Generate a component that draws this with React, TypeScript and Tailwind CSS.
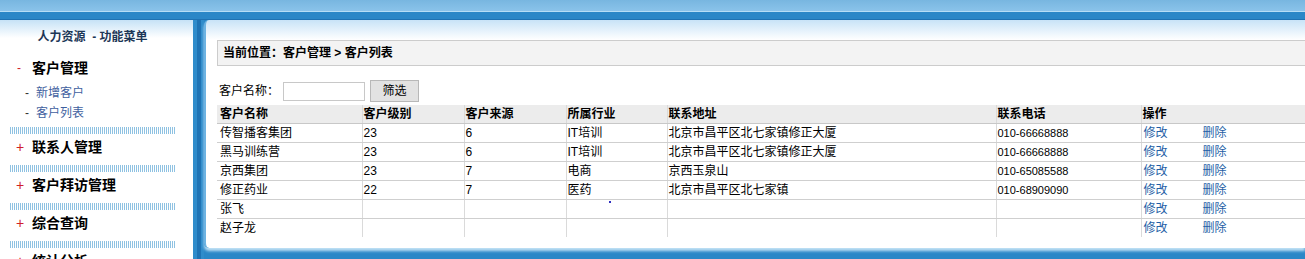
import React from 'react';

const rows = [
  { name: '传智播客集团', level: '23', source: '6', industry: 'IT培训', address: '北京市昌平区北七家镇修正大厦', phone: '010-66668888' },
  { name: '黑马训练营', level: '23', source: '6', industry: 'IT培训', address: '北京市昌平区北七家镇修正大厦', phone: '010-66668888' },
  { name: '京西集团', level: '23', source: '7', industry: '电商', address: '京西玉泉山', phone: '010-65085588' },
  { name: '修正药业', level: '22', source: '7', industry: '医药', address: '北京市昌平区北七家镇', phone: '010-68909090' },
  { name: '张飞', level: '', source: '', industry: '', address: '', phone: '' },
  { name: '赵子龙', level: '', source: '', industry: '', address: '', phone: '' },
];

const menus = ['联系人管理', '客户拜访管理', '综合查询', '统计分析'];

const Divider = () => (
  <div className="mx-[10px] h-[7px] w-[165px] bg-[repeating-linear-gradient(90deg,#8fc2e2_0px,#8fc2e2_1px,#ffffff_1px,#ffffff_2px)]" />
);

export default function App() {
  return (
    <div className="flex h-[259px] w-full flex-col overflow-hidden bg-[#2a87c7] font-['Liberation_Sans','Noto_Sans_CJK_SC',sans-serif] text-[12px] text-black">
      {/* top bar */}
      <div className="h-[11px] shrink-0 bg-gradient-to-b from-[#78b6e0] to-[#8ac3ea]" />
      <div className="h-[1px] shrink-0 bg-[#b6def5]" />
      <div className="h-[7px] shrink-0 bg-[#2a87c7]" />
      <div className="h-[1px] shrink-0 bg-[#1f72b2]" />

      <div className="flex min-h-0 flex-1">
        {/* sidebar */}
        <div className="w-[193px] overflow-hidden bg-gradient-to-b from-[#c6e2f6] via-white via-[18px] to-white">
          <div className="pr-[8px] pt-[9px] text-center font-bold leading-[16px] text-[#1c3656]">人力资源&nbsp; - 功能菜单</div>
          <div className="mt-[14px] flex items-center leading-[18px]">
            <span className="ml-[17px] w-[15px] text-[#d0202a]">-</span>
            <span className="text-[14px] font-bold">客户管理</span>
          </div>
          <div className="mt-[7px] flex items-center leading-[18px] text-[#3f5fa0]">
            <span className="ml-[25px] w-[11px] text-[#333]">-</span>
            <span>新增客户</span>
          </div>
          <div className="mt-[2px] flex items-center leading-[18px] text-[#3f5fa0]">
            <span className="ml-[25px] w-[11px] text-[#333]">-</span>
            <span>客户列表</span>
          </div>
          <div className="mt-[5px]">
            {menus.map((m) => (
              <div key={m}>
                <Divider />
                <div className="flex h-[31px] items-center pb-[4px]">
                  <span className="ml-[16px] w-[16px] text-[14px] text-[#d0202a]">+</span>
                  <span className="text-[14px] font-bold">{m}</span>
                </div>
              </div>
            ))}
          </div>
        </div>

        {/* separator */}
        <div className="flex w-[11px] shrink-0 justify-center bg-[#2f8ccb]">
          <div className="w-[4px] bg-[#1f73b4]" />
        </div>

        {/* main panel */}
        <div className="mb-[11px] flex-1 overflow-hidden rounded-l-[5px] border-l-[2px] border-[#6db3e2] bg-gradient-to-b from-[#c8e3f7] via-white via-[20px] to-white pl-[11px] pt-[20px] shadow-[0_3px_3px_#bfe0f5]">
          <div className="flex h-[26px] w-[1200px] items-center border border-[#cccccc] bg-[#f3f3f3] pl-[5px] font-bold">
            当前位置：客户管理 &gt; 客户列表
          </div>

          <div className="mt-[14px] flex items-center pl-[2px]">
            <span>客户名称：</span>
            <input className="ml-[4px] h-[19px] w-[82px] border border-[#c8c8c8] bg-white" />
            <button className="ml-[5px] h-[22px] w-[49px] border border-[#b8b8b8] bg-[#e2e2e2] text-[12px]">筛选</button>
          </div>

          <table className="mt-[3px] w-[1100px] table-fixed border-collapse">
            <colgroup>
              <col className="w-[145px]" />
              <col className="w-[102px]" />
              <col className="w-[102px]" />
              <col className="w-[101px]" />
              <col className="w-[329px]" />
              <col className="w-[145px]" />
              <col />
            </colgroup>
            <thead>
              <tr className="h-[18px] bg-[#ececec] text-left leading-[16px]">
                {['客户名称', '客户级别', '客户来源', '所属行业', '联系地址', '联系电话', '操作'].map((h, i) => (
                  <th key={h} className={`border-b border-[#c8c8c8] font-bold ${i > 0 ? 'border-l border-l-[#dadada] pl-[1px]' : 'pl-[3px]'}`}>
                    {h}
                  </th>
                ))}
              </tr>
            </thead>
            <tbody>
              {rows.map((r, idx) => {
                const bb = idx < rows.length - 1 ? 'border-b border-b-[#cfcfcf]' : '';
                return (
                  <tr key={r.name} className="h-[19px] leading-[16px]">
                    <td className={`pl-[3px] ${bb}`}>{r.name}</td>
                    <td className={`border-l border-[#dadada] pl-[1px] ${bb}`}>{r.level}</td>
                    <td className={`border-l border-[#dadada] pl-[1px] ${bb}`}>{r.source}</td>
                    <td className={`border-l border-[#dadada] pl-[1px] ${bb}`}>
                      {idx === 4 ? <span className="ml-[41px] inline-block h-[2px] w-[2px] bg-[#3030c0] align-top" /> : r.industry}
                    </td>
                    <td className={`border-l border-[#dadada] pl-[1px] ${bb}`}>{r.address}</td>
                    <td className={`border-l border-[#dadada] pl-[1px] text-[11px] ${bb}`}>{r.phone}</td>
                    <td className={`border-l border-[#dadada] pl-[2px] text-[#1f5fa6] ${bb}`}>
                      <a className="inline-block w-[59px] cursor-pointer">修改</a>
                      <a className="cursor-pointer">删除</a>
                    </td>
                  </tr>
                );
              })}
            </tbody>
          </table>
        </div>
      </div>
    </div>
  );
}
